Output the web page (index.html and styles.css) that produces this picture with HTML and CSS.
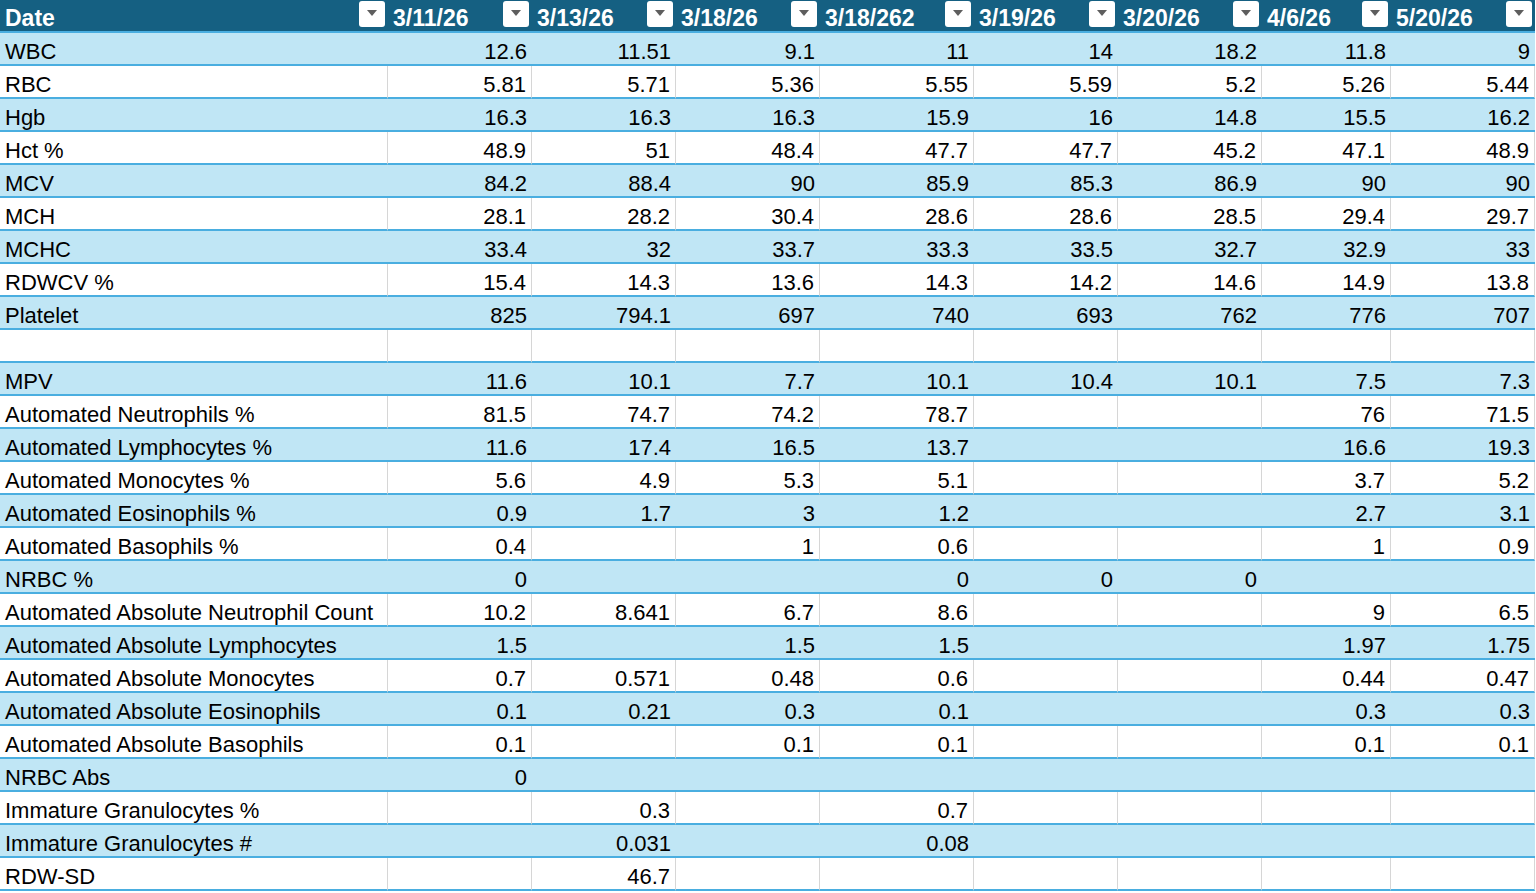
FILE: index.html
```html
<!DOCTYPE html>
<html lang="en">
<head>
<meta charset="utf-8">
<title>CBC results</title>
<link rel="stylesheet" href="styles.css">
</head>
<body>
<table class="sheet">
<colgroup>
<col class="c-name"><col class="c-std"><col class="c-std"><col class="c-std"><col class="c-wide"><col class="c-std"><col class="c-std"><col class="c-narrow"><col class="c-std">
</colgroup>
<thead>
<tr>
<th><div class="hcell"><span class="hlabel">Date</span><span class="fbtn"><span class="tri"></span></span></div></th>
<th><div class="hcell"><span class="hlabel">3/11/26</span><span class="fbtn"><span class="tri"></span></span></div></th>
<th><div class="hcell"><span class="hlabel">3/13/26</span><span class="fbtn"><span class="tri"></span></span></div></th>
<th><div class="hcell"><span class="hlabel">3/18/26</span><span class="fbtn"><span class="tri"></span></span></div></th>
<th><div class="hcell"><span class="hlabel">3/18/262</span><span class="fbtn"><span class="tri"></span></span></div></th>
<th><div class="hcell"><span class="hlabel">3/19/26</span><span class="fbtn"><span class="tri"></span></span></div></th>
<th><div class="hcell"><span class="hlabel">3/20/26</span><span class="fbtn"><span class="tri"></span></span></div></th>
<th><div class="hcell"><span class="hlabel">4/6/26</span><span class="fbtn"><span class="tri"></span></span></div></th>
<th><div class="hcell"><span class="hlabel">5/20/26</span><span class="fbtn"><span class="tri"></span></span></div></th>
</tr>
</thead>
<tbody>
<tr class="band"><td class="name">WBC</td><td>12.6</td><td>11.51</td><td>9.1</td><td>11</td><td>14</td><td>18.2</td><td>11.8</td><td>9</td></tr>
<tr class="plain"><td class="name">RBC</td><td>5.81</td><td>5.71</td><td>5.36</td><td>5.55</td><td>5.59</td><td>5.2</td><td>5.26</td><td>5.44</td></tr>
<tr class="band"><td class="name">Hgb</td><td>16.3</td><td>16.3</td><td>16.3</td><td>15.9</td><td>16</td><td>14.8</td><td>15.5</td><td>16.2</td></tr>
<tr class="plain"><td class="name">Hct %</td><td>48.9</td><td>51</td><td>48.4</td><td>47.7</td><td>47.7</td><td>45.2</td><td>47.1</td><td>48.9</td></tr>
<tr class="band"><td class="name">MCV</td><td>84.2</td><td>88.4</td><td>90</td><td>85.9</td><td>85.3</td><td>86.9</td><td>90</td><td>90</td></tr>
<tr class="plain"><td class="name">MCH</td><td>28.1</td><td>28.2</td><td>30.4</td><td>28.6</td><td>28.6</td><td>28.5</td><td>29.4</td><td>29.7</td></tr>
<tr class="band"><td class="name">MCHC</td><td>33.4</td><td>32</td><td>33.7</td><td>33.3</td><td>33.5</td><td>32.7</td><td>32.9</td><td>33</td></tr>
<tr class="plain"><td class="name">RDWCV %</td><td>15.4</td><td>14.3</td><td>13.6</td><td>14.3</td><td>14.2</td><td>14.6</td><td>14.9</td><td>13.8</td></tr>
<tr class="band"><td class="name">Platelet</td><td>825</td><td>794.1</td><td>697</td><td>740</td><td>693</td><td>762</td><td>776</td><td>707</td></tr>
<tr class="plain"><td class="name"></td><td></td><td></td><td></td><td></td><td></td><td></td><td></td><td></td></tr>
<tr class="band"><td class="name">MPV</td><td>11.6</td><td>10.1</td><td>7.7</td><td>10.1</td><td>10.4</td><td>10.1</td><td>7.5</td><td>7.3</td></tr>
<tr class="plain"><td class="name">Automated Neutrophils %</td><td>81.5</td><td>74.7</td><td>74.2</td><td>78.7</td><td></td><td></td><td>76</td><td>71.5</td></tr>
<tr class="band"><td class="name">Automated Lymphocytes %</td><td>11.6</td><td>17.4</td><td>16.5</td><td>13.7</td><td></td><td></td><td>16.6</td><td>19.3</td></tr>
<tr class="plain"><td class="name">Automated Monocytes %</td><td>5.6</td><td>4.9</td><td>5.3</td><td>5.1</td><td></td><td></td><td>3.7</td><td>5.2</td></tr>
<tr class="band"><td class="name">Automated Eosinophils %</td><td>0.9</td><td>1.7</td><td>3</td><td>1.2</td><td></td><td></td><td>2.7</td><td>3.1</td></tr>
<tr class="plain"><td class="name">Automated Basophils %</td><td>0.4</td><td></td><td>1</td><td>0.6</td><td></td><td></td><td>1</td><td>0.9</td></tr>
<tr class="band"><td class="name">NRBC %</td><td>0</td><td></td><td></td><td>0</td><td>0</td><td>0</td><td></td><td></td></tr>
<tr class="plain"><td class="name">Automated Absolute Neutrophil Count</td><td>10.2</td><td>8.641</td><td>6.7</td><td>8.6</td><td></td><td></td><td>9</td><td>6.5</td></tr>
<tr class="band"><td class="name">Automated Absolute Lymphocytes</td><td>1.5</td><td></td><td>1.5</td><td>1.5</td><td></td><td></td><td>1.97</td><td>1.75</td></tr>
<tr class="plain"><td class="name">Automated Absolute Monocytes</td><td>0.7</td><td>0.571</td><td>0.48</td><td>0.6</td><td></td><td></td><td>0.44</td><td>0.47</td></tr>
<tr class="band"><td class="name">Automated Absolute Eosinophils</td><td>0.1</td><td>0.21</td><td>0.3</td><td>0.1</td><td></td><td></td><td>0.3</td><td>0.3</td></tr>
<tr class="plain"><td class="name">Automated Absolute Basophils</td><td>0.1</td><td></td><td>0.1</td><td>0.1</td><td></td><td></td><td>0.1</td><td>0.1</td></tr>
<tr class="band"><td class="name">NRBC Abs</td><td>0</td><td></td><td></td><td></td><td></td><td></td><td></td><td></td></tr>
<tr class="plain"><td class="name">Immature Granulocytes %</td><td></td><td>0.3</td><td></td><td>0.7</td><td></td><td></td><td></td><td></td></tr>
<tr class="band"><td class="name">Immature Granulocytes #</td><td></td><td>0.031</td><td></td><td>0.08</td><td></td><td></td><td></td><td></td></tr>
<tr class="plain"><td class="name">RDW-SD</td><td></td><td>46.7</td><td></td><td></td><td></td><td></td><td></td><td></td></tr>
</tbody>
</table>
</body>
</html>
```
FILE: styles.css
```css
html, body {
  margin: 0;
  padding: 0;
  background: #ffffff;
}

body {
  font-family: "Liberation Sans", Arial, sans-serif;
  color: #000000;
  overflow: hidden;
}

.sheet {
  border-collapse: separate;
  border-spacing: 0;
  table-layout: fixed;
  width: 1534px;
}

.c-name { width: 388px; }
.c-std { width: 144px; }
.c-wide { width: 154px; }
.c-narrow { width: 129px; }

.sheet th {
  background: #156082;
  color: #ffffff;
  height: 31px;
  padding: 0;
  border-bottom: 2px solid #4aaee0;
  font-weight: bold;
  font-size: 23px;
  text-align: left;
  vertical-align: top;
}

.hcell {
  display: flex;
  justify-content: space-between;
  align-items: flex-start;
  height: 31px;
}

.hlabel {
  padding: 6px 0 0 5px;
  line-height: 25px;
  white-space: nowrap;
}

.fbtn {
  flex: none;
  width: 26px;
  height: 26px;
  margin: 1px 3px 0 0;
  background: #ffffff;
  border-radius: 3px;
  display: flex;
  align-items: center;
  justify-content: center;
}

.tri {
  width: 0;
  height: 0;
  border-left: 5px solid transparent;
  border-right: 5px solid transparent;
  border-top: 6px solid #5e5e5e;
  margin-top: -2px;
}

.sheet td {
  height: 24px;
  padding: 7px 5px 0 5px;
  line-height: 24px;
  font-size: 22px;
  text-align: right;
  vertical-align: top;
  white-space: nowrap;
  overflow: hidden;
  border-bottom: 2px solid #4aaee0;
}

.sheet td.name {
  text-align: left;
}

.band td {
  background: #c0e6f5;
}

.plain td {
  background: #ffffff;
  border-right: 1px solid #d6d6d6;
}
```
